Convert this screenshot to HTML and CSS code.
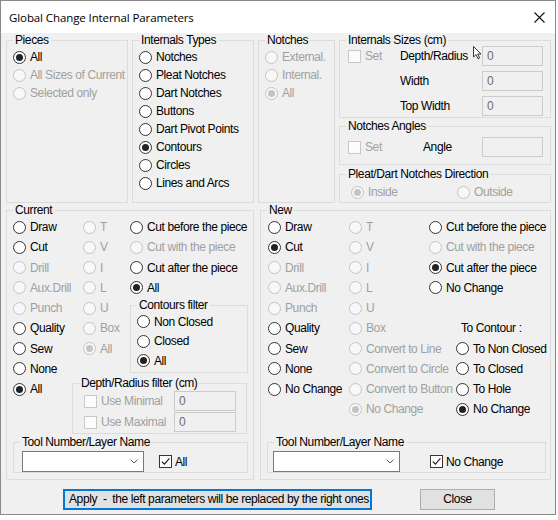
FILE: index.html
```html
<!DOCTYPE html>
<html>
<head>
<meta charset="utf-8">
<title>Global Change Internal Parameters</title>
<link rel="stylesheet" href="styles.css">
</head>
<body>
<div class="window">
  <div class="titlebar">
    <span class="title">Global Change Internal Parameters</span>
    <svg class="xicon" width="11" height="11" viewBox="0 0 11 11"><path d="M0.5 0.5L10.5 10.5M10.5 0.5L0.5 10.5" stroke="#111" stroke-width="1.1" fill="none"/></svg>
  </div>
  <div class="client">
    <div class="top-row">
      <fieldset class="grp w-pieces"><legend>Pieces</legend>
        <div class="list r18">
          <div class="opt"><span class="rb on"></span>All</div>
          <div class="opt dis"><span class="rb"></span>All Sizes of Current</div>
          <div class="opt dis"><span class="rb"></span>Selected only</div>
        </div>
      </fieldset>
      <fieldset class="grp w-types"><legend>Internals Types</legend>
        <div class="list r18">
          <div class="opt"><span class="rb"></span>Notches</div>
          <div class="opt"><span class="rb"></span>Pleat Notches</div>
          <div class="opt"><span class="rb"></span>Dart Notches</div>
          <div class="opt"><span class="rb"></span>Buttons</div>
          <div class="opt"><span class="rb"></span>Dart Pivot Points</div>
          <div class="opt"><span class="rb on"></span>Contours</div>
          <div class="opt"><span class="rb"></span>Circles</div>
          <div class="opt"><span class="rb"></span>Lines and Arcs</div>
        </div>
      </fieldset>
      <fieldset class="grp w-notches"><legend>Notches</legend>
        <div class="list r18">
          <div class="opt dis"><span class="rb"></span>External.</div>
          <div class="opt dis"><span class="rb"></span>Internal.</div>
          <div class="opt dis"><span class="rb on"></span>All</div>
        </div>
      </fieldset>
      <div class="right-col">
        <fieldset class="grp sizes"><legend>Internals Sizes (cm)</legend>
          <div class="form sizes-form">
            <div class="opt dis"><span class="cb"></span>Set</div>
            <div class="flabel cursor-host">Depth/Radius<svg class="cursor" width="10" height="14" viewBox="0 0 10 14"><path d="M0.5 0.5L0.5 11L3 8.6L5 12.8L6.6 12L4.7 8L8 8Z" fill="#fff" stroke="#222" stroke-width="0.9"/></svg></div>
            <div class="field">0</div>
            <div></div><div class="flabel">Width</div><div class="field">0</div>
            <div></div><div class="flabel">Top Width</div><div class="field">0</div>
          </div>
        </fieldset>
        <fieldset class="grp angles"><legend>Notches Angles</legend>
          <div class="form angles-form">
            <div class="opt dis"><span class="cb"></span>Set</div>
            <div class="flabel angle-l">Angle</div>
            <div class="field"></div>
          </div>
        </fieldset>
        <fieldset class="grp pleat"><legend>Pleat/Dart Notches Direction</legend>
          <div class="pleat-row">
            <div class="opt dis inside"><span class="rb on"></span>Inside</div>
            <div class="opt dis"><span class="rb"></span>Outside</div>
          </div>
        </fieldset>
      </div>
    </div>

    <div class="bottom-row">
      <fieldset class="grp current"><legend>Current</legend>
        <div class="cur-inner">
          <div class="cur-main">
            <div class="list r20 cur-c1">
              <div class="opt"><span class="rb"></span>Draw</div>
              <div class="opt"><span class="rb"></span>Cut</div>
              <div class="opt dis"><span class="rb"></span>Drill</div>
              <div class="opt dis"><span class="rb"></span>Aux.Drill</div>
              <div class="opt dis"><span class="rb"></span>Punch</div>
              <div class="opt"><span class="rb"></span>Quality</div>
              <div class="opt"><span class="rb"></span>Sew</div>
              <div class="opt"><span class="rb"></span>None</div>
              <div class="opt"><span class="rb on"></span>All</div>
            </div>
            <div class="cur-right">
              <div class="cur-top">
                <div class="list r20 cur-c2">
                  <div class="opt dis"><span class="rb"></span>T</div>
                  <div class="opt dis"><span class="rb"></span>V</div>
                  <div class="opt dis"><span class="rb"></span>I</div>
                  <div class="opt dis"><span class="rb"></span>L</div>
                  <div class="opt dis"><span class="rb"></span>U</div>
                  <div class="opt dis"><span class="rb"></span>Box</div>
                  <div class="opt dis"><span class="rb on"></span>All</div>
                </div>
                <div class="cur-c3">
                  <div class="list r20">
                    <div class="opt"><span class="rb"></span>Cut before the piece</div>
                    <div class="opt dis"><span class="rb"></span>Cut with the piece</div>
                    <div class="opt"><span class="rb"></span>Cut after the piece</div>
                    <div class="opt"><span class="rb on"></span>All</div>
                  </div>
                  <fieldset class="grp contours"><legend>Contours filter</legend>
                    <div class="list r195 contours-list">
                      <div class="opt"><span class="rb"></span>Non Closed</div>
                      <div class="opt"><span class="rb"></span>Closed</div>
                      <div class="opt"><span class="rb on"></span>All</div>
                    </div>
                  </fieldset>
                </div>
              </div>
              <fieldset class="grp depth"><legend>Depth/Radius filter (cm)</legend>
                <div class="depth-form">
                  <div class="opt dis"><span class="cb"></span>Use Minimal</div><div class="field">0</div>
                  <div class="opt dis"><span class="cb"></span>Use Maximal</div><div class="field">0</div>
                </div>
              </fieldset>
            </div>
          </div>
          <fieldset class="grp tool cur-tool"><legend>Tool Number/Layer Name</legend>
            <div class="tool-row">
              <div class="combo cur-combo"><svg width="8" height="5" viewBox="0 0 8 5"><path d="M0.5 0.5L4 4L7.5 0.5" stroke="#555" fill="none"/></svg></div>
              <div class="opt chk cur-chk"><span class="cb"><svg width="11" height="11" viewBox="0 0 11 11"><path d="M1.8 5.6L4.4 8.2L9.4 2.4" stroke="#222" stroke-width="1.2" fill="none"/></svg></span>All</div>
            </div>
          </fieldset>
        </div>
      </fieldset>

      <fieldset class="grp new"><legend>New</legend>
        <div class="new-inner">
          <div class="new-main">
            <div class="list r20 new-c1">
              <div class="opt"><span class="rb"></span>Draw</div>
              <div class="opt"><span class="rb on"></span>Cut</div>
              <div class="opt dis"><span class="rb"></span>Drill</div>
              <div class="opt dis"><span class="rb"></span>Aux.Drill</div>
              <div class="opt dis"><span class="rb"></span>Punch</div>
              <div class="opt"><span class="rb"></span>Quality</div>
              <div class="opt"><span class="rb"></span>Sew</div>
              <div class="opt"><span class="rb"></span>None</div>
              <div class="opt"><span class="rb"></span>No Change</div>
            </div>
            <div class="list r20 new-c2">
              <div class="opt dis"><span class="rb"></span>T</div>
              <div class="opt dis"><span class="rb"></span>V</div>
              <div class="opt dis"><span class="rb"></span>I</div>
              <div class="opt dis"><span class="rb"></span>L</div>
              <div class="opt dis"><span class="rb"></span>U</div>
              <div class="opt dis"><span class="rb"></span>Box</div>
              <div class="opt dis"><span class="rb"></span>Convert to Line</div>
              <div class="opt dis"><span class="rb"></span>Convert to Circle</div>
              <div class="opt dis"><span class="rb"></span>Convert to Button</div>
              <div class="opt dis"><span class="rb on"></span>No Change</div>
            </div>
            <div class="list r20 new-c3">
              <div class="opt"><span class="rb"></span>Cut before the piece</div>
              <div class="opt dis"><span class="rb"></span>Cut with the piece</div>
              <div class="opt"><span class="rb on"></span>Cut after the piece</div>
              <div class="opt"><span class="rb"></span>No Change</div>
              <div class="opt"></div>
              <div class="opt tc-label">To Contour :</div>
              <div class="opt shift"><span class="rb"></span>To Non Closed</div>
              <div class="opt shift"><span class="rb"></span>To Closed</div>
              <div class="opt shift"><span class="rb"></span>To Hole</div>
              <div class="opt shift"><span class="rb on"></span>No Change</div>
            </div>
          </div>
          <fieldset class="grp tool new-tool"><legend>Tool Number/Layer Name</legend>
            <div class="tool-row">
              <div class="combo new-combo"><svg width="8" height="5" viewBox="0 0 8 5"><path d="M0.5 0.5L4 4L7.5 0.5" stroke="#555" fill="none"/></svg></div>
              <div class="opt chk new-chk"><span class="cb"><svg width="11" height="11" viewBox="0 0 11 11"><path d="M1.8 5.6L4.4 8.2L9.4 2.4" stroke="#222" stroke-width="1.2" fill="none"/></svg></span>No Change</div>
            </div>
          </fieldset>
        </div>
      </fieldset>
    </div>

    <div class="buttons">
      <div class="btn apply">Apply&nbsp; -&nbsp; the left parameters will be replaced by the right ones</div>
      <div class="btn close">Close</div>
    </div>
  </div>
</div>
</body>
</html>
```
FILE: styles.css
```css
* { box-sizing: border-box; }
html, body { margin: 0; padding: 0; background: #ffffff; }
body {
  font-family: "Liberation Sans", Arial, sans-serif;
  font-size: 12px;
  letter-spacing: -0.4px;
  color: #000;
  width: 558px;
  height: 520px;
  overflow: hidden;
}
.window {
  width: 556px;
  height: 515px;
  border: 1px solid #8a8a8a;
  background: #f0f0f0;
  display: flex;
  flex-direction: column;
}
.titlebar {
  flex: none;
  height: 32px;
  background: #fff;
  display: flex;
  align-items: center;
  justify-content: space-between;
  padding: 0 10px 0 8px;
}
.title {
  font-family: "Open Sans", "Noto Sans", sans-serif;
  font-size: 11.5px;
  letter-spacing: -0.1px;
  color: #000;
}
.xicon { display: block; }
.client { flex: 1; padding: 0 4px 0 5px; }

.grp {
  margin: 0;
  padding: 0;
  border: 1px solid #dcdcdc;
  min-width: 0;
}
.grp > legend {
  padding: 0 2px;
  margin-left: 6px;
  line-height: 14px;
  font-size: 12px;
}

.list { display: flex; flex-direction: column; }
.r18 { --row: 18px; padding: 1px 0 0 6px; }
.r20 { --row: 20.25px; }
.r195 { --row: 19.5px; }
.opt {
  display: flex;
  align-items: center;
  gap: 4px;
  height: var(--row, 20px);
  white-space: nowrap;
}
.dis { color: #a0a0a0; }

.rb {
  flex: none;
  width: 13px;
  height: 13px;
  border: 1px solid #333;
  border-radius: 50%;
  background: #fff;
  display: flex;
  align-items: center;
  justify-content: center;
}
.rb.on::after {
  content: "";
  width: 7px;
  height: 7px;
  border-radius: 50%;
  background: #222;
}
.dis .rb { border-color: #c4c4c4; background: #f8f8f8; }
.dis .rb.on::after { background: #c4c4c4; }

.cb {
  flex: none;
  width: 13px;
  height: 13px;
  border: 1px solid #333;
  background: #fff;
  display: flex;
  align-items: center;
  justify-content: center;
}
.cb svg { display: block; }
.dis .cb { border-color: #c8c8c8; background: #fcfcfc; }

.field {
  height: 20px;
  border: 1px solid #cccccc;
  background: #f0f0f0;
  color: #6d6d6d;
  padding-left: 4px;
  line-height: 18px;
}

/* top row */
.top-row { display: flex; gap: 4px; }
.w-pieces { flex: none; width: 122px; }
.w-types { flex: none; width: 122px; }
.w-notches { flex: none; width: 77px; }
.right-col { flex: none; width: 212px; display: flex; flex-direction: column; }

.form {
  display: grid;
  grid-template-columns: 52px 82px 61px;
  grid-auto-rows: 20px;
  align-items: center;
  padding-left: 8px;
}
.form .opt { height: 20px; }
.sizes-form { margin-top: -1px; row-gap: 5px; padding-bottom: 1px; }
.angles { margin-top: 1px; }
.angles-form { padding-top: 4px; padding-bottom: 7px; }
.angle-l { padding-left: 23px; }
.cursor-host { position: relative; }
.cursor { position: absolute; left: 73px; top: -3px; }

.pleat { margin-top: 2px; }
.pleat-row { display: flex; padding: 1px 0 0 11px; }
.pleat-row .opt { height: 20px; }
.inside { width: 106px; }

/* bottom row */
.bottom-row { display: flex; gap: 6px; }
.current { flex: none; width: 248px; }
.new { flex: 1; }

.cur-inner { padding: 0 5px 6px 6px; }
.cur-main { display: flex; }
.cur-c1 { flex: none; width: 59px; }
.cur-right { flex: none; width: 176px; }
.cur-top { display: flex; }
.cur-c2 { flex: none; width: 58px; padding-left: 11px; }
.cur-c3 { flex: none; width: 118px; }
.contours-list { padding: 0 0 1px 6px; }

.depth { margin: 3.5px 1px 0 0; }
.depth-form {
  display: grid;
  grid-template-columns: 90px 62px;
  grid-auto-rows: 20px;
  row-gap: 1px;
  align-items: center;
  padding: 1px 0 1px 11px;
}
.depth-form .opt { height: 20px; }

.cur-tool { margin-top: 1px; }
.tool-row { display: flex; align-items: center; padding-top: 2px; }
.cur-tool .tool-row { padding-left: 8px; }
.new-tool .tool-row { padding-left: 5px; }
.combo {
  height: 21px;
  border: 1px solid #7a7a7a;
  background: #fff;
  display: flex;
  align-items: center;
  justify-content: flex-end;
  padding-right: 5px;
}
.combo svg { display: block; }
.cur-combo { width: 122px; }
.new-combo { width: 127px; }
.chk { height: 21px; gap: 3px; }
.cur-chk { margin-left: 15px; }
.new-chk { margin-left: 30px; }

.new-inner { padding: 0 0 6px 7px; }
.new-main { display: flex; }
.new-c1 { flex: none; width: 81px; }
.new-c2 { flex: none; width: 80px; }
.new-c3 { flex: 1; }
.shift { margin-left: 27px; }
.tc-label { padding-left: 32px; }
.new-tool { margin: 15.5px 4px 0 -1px; }

/* buttons */
.buttons { display: flex; margin-top: 9px; padding-left: 57px; }
.btn {
  height: 21px;
  background: #e1e1e1;
  white-space: nowrap;
}
.apply {
  width: 309px;
  border: 2px solid #0078d7;
  padding-left: 4px;
  line-height: 17px;
}
.close {
  width: 75px;
  margin-left: 48px;
  border: 1px solid #adadad;
  text-align: center;
  line-height: 19px;
}
```
